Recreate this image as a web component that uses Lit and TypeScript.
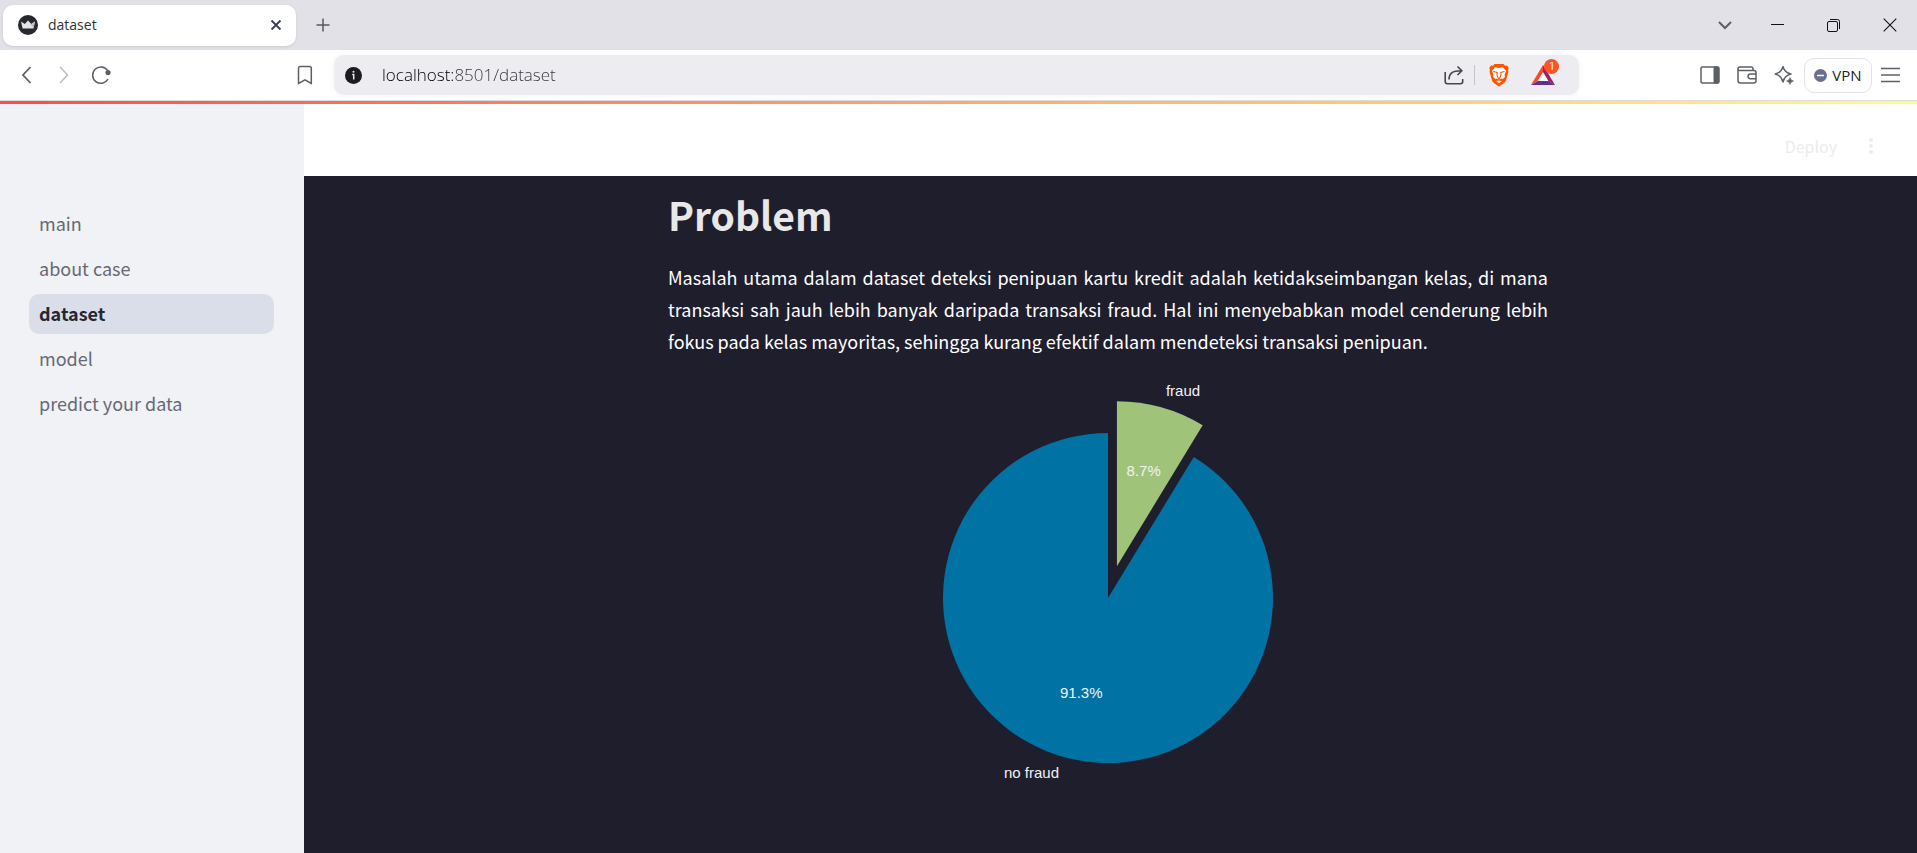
import { LitElement, html, svg, css } from "lit";
import { customElement, state } from "lit/decorators.js";

interface Slice {
  label: string;
  share: number;
  color: string;
  explode: number;
}

const slices: Slice[] = [
  { label: "fraud", share: 0.087, color: "#9fc379", explode: 0.2 },
  { label: "no fraud", share: 0.913, color: "#0072a3", explode: 0 },
];

@customElement("pie-chart")
class PieChart extends LitElement {
  static styles = css`
    :host { display: block; }
    .chart { display: block; width: 100%; height: auto; }
    .label { font: 15px "Liberation Sans", Arial, sans-serif; fill: #f2f2f4; }
    .start { text-anchor: start; }
    .middle { text-anchor: middle; }
    .end { text-anchor: end; }
  `;

  render() {
    const cx = 440, cy = 228, r = 165;
    let from = 0;
    const parts = slices.map((s) => {
      const a0 = from * 2 * Math.PI;
      const a1 = (from + s.share) * 2 * Math.PI;
      const mid = (a0 + a1) / 2;
      from += s.share;
      const ox = cx + Math.sin(mid) * r * s.explode;
      const oy = cy - Math.cos(mid) * r * s.explode;
      const at = (a: number, d: number) => [ox + Math.sin(a) * d, oy - Math.cos(a) * d];
      const [x0, y0] = at(a0, r);
      const [x1, y1] = at(a1, r);
      const [px, py] = at(mid, r * 0.6);
      const [lx, ly] = at(mid, r * 1.1);
      const d = `M${ox} ${oy}L${x0} ${y0}A${r} ${r} 0 ${s.share > 0.5 ? 1 : 0} 1 ${x1} ${y1}Z`;
      return svg`
        <path d=${d} fill=${s.color}></path>
        <text class="label middle" x=${px} y=${py + 5}>${(s.share * 100).toFixed(1)}%</text>
        <text class="label ${lx > cx ? "start" : "end"}" x=${lx} y=${ly + 5}>${s.label}</text>`;
    });
    return html`<svg class="chart" viewBox="0 0 880 440" role="img" aria-label="Share of fraud and no fraud">${parts}</svg>`;
  }
}

@customElement("browser-chrome")
class BrowserChrome extends LitElement {
  static styles = css`
    :host { display: block; font-family: "Open Sans", "Segoe UI", sans-serif; color: #3b3e4f; }
    button { border: 0; background: none; padding: 0; font: inherit; color: inherit; display: flex; align-items: center; justify-content: center; }
    svg { display: block; fill: none; stroke: currentColor; stroke-width: 1.5; }
    .tabs { display: flex; align-items: center; height: 50px; background: #e2e1e7; }
    .tab { display: flex; align-items: center; gap: 10px; box-sizing: border-box; width: 293px; height: 41px; margin-left: 3px; padding: 0 14px 0 15px; border-radius: 10px; background: #fff; box-shadow: 0 1px 3px #0000001a; }
    .tab-title { flex: 1; font-size: 14px; line-height: 20px; color: #2f3136; }
    .new-tab { width: 24px; height: 24px; margin-left: 15px; color: #55585c; }
    .window { display: flex; margin-left: auto; color: #111; }
    .window button { width: 57px; height: 40px; }
    .window .search { width: 44px; color: #5c5f64; }
    .window .minimize { width: 60px; }
    .window .maximize { width: 52px; }
    .window .close { width: 62px; margin-right: -4px; }
    .bar { display: flex; align-items: center; height: 50px; background: #fff; border-bottom: 1px solid #dcdce2; color: #5c6066; }
    .nav { display: flex; gap: 7px; margin-left: 12px; }
    .nav button { width: 30px; height: 30px; }
    .nav .muted { color: #b9bbbf; }
    .bookmark { width: 30px; height: 30px; margin-left: 174px; }
    .address { display: flex; align-items: center; flex: 1; height: 40px; margin-left: 14px; padding-left: 11px; border-radius: 10px; background: #ededf1; box-shadow: 0 0 8px #0000000d; color: #45484d; }
    .url { flex: 1; min-width: 0; border: 0; outline: 0; padding: 0 0 2px; margin-left: 20px; height: 30px; font: 300 17px "Open Sans", "Segoe UI", sans-serif; color: transparent; background: linear-gradient(90deg, #000 71px, #33353f 71px); background-clip: text; -webkit-background-clip: text; }
    .share { width: 30px; height: 30px; }
    .divider { width: 1px; height: 20px; margin: 0 10px 0 5px; background: #c4c5cb; }
    .shield { width: 28px; height: 30px; }
    .rewards { position: relative; width: 30px; height: 30px; margin: 0 21px 0 15px; }
    .badge { position: absolute; top: -1px; right: -1px; width: 15px; height: 15px; border-radius: 8px; background: #fb542b; color: #fff; font: 10px/15px "Inter", sans-serif; text-align: center; }
    .tools { display: flex; align-items: center; margin-left: 112px; margin-right: 9px; }
    .tool { width: 37px; height: 30px; }
    .vpn { box-sizing: border-box; width: 68px; height: 35px; margin-left: 2px; gap: 5px; border: 1px solid #e2e3e8; border-radius: 10px; font-size: 15px; color: #1d1f25; }
    .menu { width: 36px; height: 30px; }
  `;

  @state() private url = "localhost:8501/dataset";

  render() {
    return html`
      <div class="tabs">
        <div class="tab">
          <svg width="20" height="20" viewBox="0 0 20 20"><circle cx="10" cy="10" r="10" fill="#262730" stroke="none"/><path d="M3 6.5 6.8 9 10 5.6 13.2 9 17 6.5 15.4 13.4H4.6Z" fill="#e4e4e6" stroke="none"/><path d="M10 5.6 13.2 9 17 6.5 15.4 13.4Z" fill="#bdbdc2" stroke="none"/></svg>
          <span class="tab-title">dataset</span>
          <button aria-label="Close tab"><svg width="12" height="12" viewBox="0 0 12 12"><path d="M1.5 1.5 10.5 10.5M10.5 1.5 1.5 10.5" stroke-width="1.8"/></svg></button>
        </div>
        <button class="new-tab" aria-label="New tab"><svg width="14" height="14" viewBox="0 0 14 14"><path d="M7 .5V13.500M.5 7H13.500"/></svg></button>
        <div class="window">
          <button class="search" aria-label="Search tabs"><svg width="14" height="10" viewBox="0 0 14 10"><path d="M1 2 7 8 13 2" stroke-width="2"/></svg></button>
          <button class="minimize" aria-label="Minimize"><svg width="13" height="13" viewBox="0 0 13 13"><path d="M0 5.500H13" stroke-width="1"/></svg></button>
          <button class="maximize" aria-label="Restore"><svg width="13" height="13" viewBox="0 0 13 13"><rect x=".5" y="2.500" width="10" height="10" rx="1.500" stroke-width="1"/><path d="M3 .5H10.500A2 2 0 0 1 12.500 2.500V10" stroke-width="1"/></svg></button>
          <button class="close" aria-label="Close"><svg width="14" height="14" viewBox="0 0 14 14"><path d="M.7.7 13.300 13.300M13.300.7.7 13.300" stroke-width="1.1"/></svg></button>
        </div>
      </div>
      <div class="bar">
        <div class="nav">
          <button aria-label="Back"><svg width="12" height="18" viewBox="0 0 12 18"><path d="M9.500 1 2 9 9.500 17" stroke-width="1.8"/></svg></button>
          <button class="muted" aria-label="Forward"><svg width="12" height="18" viewBox="0 0 12 18"><path d="M2 1 9.500 9 2 17" stroke-width="1.5"/></svg></button>
          <button aria-label="Reload"><svg width="20" height="20" viewBox="0 0 20 20"><path d="M17 14.200A8.200 8.200 0 1 1 16.500 5.300"/><circle cx="17" cy="7.600" r="2.600" fill="currentColor" stroke="none"/></svg></button>
        </div>
        <button class="bookmark" aria-label="Bookmark"><svg width="16" height="20" viewBox="0 0 16 20"><path d="M3 1.500H12.500Q14.300 1.500 14.300 3.300V18.500L8 14.800 1.500 18.500V3.300Q1.500 1.500 3 1.500Z"/></svg></button>
        <div class="address">
          <svg width="17" height="17" viewBox="0 0 17 17"><circle cx="8.500" cy="8.500" r="8.500" fill="#1b1b21" stroke="none"/><path d="M7.200 7.500H8.700V12.500" stroke="#e8e8ec"/><circle cx="8.500" cy="4.800" r="1" fill="#e8e8ec" stroke="none"/></svg>
          <input class="url" aria-label="Address" spellcheck="false" .value=${this.url}
            @input=${(e: InputEvent) => (this.url = (e.target as HTMLInputElement).value)} />
          <button class="share" aria-label="Share"><svg width="20" height="20" viewBox="0 0 20 20"><path d="M1.200 7V16.500Q1.200 18.700 3.400 18.700H16.500Q18.700 18.700 18.700 16.500V14M5 14.500C5 8.500 8 5.700 17.500 5.700M13.500 1.500 17.800 5.700 13.500 10" stroke-width="1.6"/></svg></button>
          <span class="divider"></span>
          <button class="shield" aria-label="Shields">
            <svg width="20" height="24" viewBox="0 0 20 24"><path d="M5.500 1H14.500L16 2.700 18 2.500 19.800 5 19 7 19.500 8.500 17 17.500Q16.500 19 14.500 20.500L10 23.500 5.500 20.500Q3.500 19 3 17.500L.5 8.500 1 7 .2 5 2 2.500 4 2.700Z" fill="#ff5500" stroke="none"/><path d="M6 4.300 10 5 14 4.300 17 7.800 15.500 12 16 14 13.500 16 12 15.500 10.800 16.500 13 18 10 20.300 7 18 9.200 16.500 8 15.500 6.500 16 4 14 4.500 12 3 7.800Z" fill="#fff" stroke="none"/><path d="M4.500 8.500 8.200 9.500 8 12 9.200 15 10 15.700 10.800 15 12 12 11.800 9.500 15.500 8.500M7.500 17.700 10 16.700 12.500 17.700" stroke="#ff5500" stroke-width="1.100"/></svg>
          </button>
          <button class="rewards" aria-label="Rewards">
            <svg width="24" height="20" viewBox="0 0 24 20"><path d="M12 0 0 20 7 16 12 7.500Z" fill="#ff4724" stroke="none"/><path d="M12 0 24 20 17 16 12 7.500Z" fill="#9e1f63" stroke="none"/><path d="M0 20H24L17 16H7Z" fill="#662d91" stroke="none"/><path d="M12 7 6.700 16H17.300Z" fill="#fff" stroke="none"/></svg>
            <span class="badge">1</span>
          </button>
        </div>
        <div class="tools">
          <button class="tool" aria-label="Sidebar"><svg width="20" height="18" viewBox="0 0 20 18"><rect x="1" y="1" width="18" height="16" rx="1.500"/><path d="M14 1H18.500V17H14Z" fill="currentColor" stroke-width="1"/></svg></button>
          <button class="tool" aria-label="Wallet"><svg width="20" height="18" viewBox="0 0 20 18"><path d="M16 4V2.800Q16 1 14.200 1H2.800Q1 1 1 2.800V14.500Q1 17 3.500 17H16.500Q19 17 19 15V6.500Q19 4.500 17 4.500H2.500Q1 4.500 1 2.800M19 8H13.500Q11 8 11 10.300T13.500 12.700H19"/></svg></button>
          <button class="tool" aria-label="Assistant"><svg width="20" height="20" viewBox="0 0 20 20"><path d="M9 1.500Q10.500 7.500 17 9 10.500 10.500 9 17 7.500 10.500 1.200 9 7.500 7.500 9 1.500Z" stroke-linejoin="round" stroke-width="1.400"/><path d="M16 12.500Q16.500 15.500 19.500 16 16.500 16.500 16 19.500 15.500 16.500 12.500 16 15.500 15.500 16 12.500Z" fill="currentColor" stroke-width=".6"/></svg></button>
          <button class="vpn"><svg width="13" height="13" viewBox="0 0 13 13"><circle cx="6.500" cy="6.500" r="6.500" fill="#6b7090" stroke="none"/><path d="M3 6.500H10" stroke="#fff"/></svg>VPN</button>
          <button class="menu" aria-label="Menu"><svg width="19" height="16" viewBox="0 0 19 16"><path d="M0 1.500H19M0 8H19M0 14.500H19"/></svg></button>
        </div>
      </div>`;
  }
}

@customElement("app-root")
class AppRoot extends LitElement {
  static styles = css`
    :host { display: flex; flex-direction: column; min-height: 100vh; overflow: hidden; font-family: "Noto Sans CJK SC", sans-serif; font-size: 18px; }
    .accent { height: 3px; background: linear-gradient(90deg, #ff4b4b, #ffa066 45%, #ffd06a 75%, #fffd80); }
    .app { display: flex; flex: 1; background: #1f1e2d; }
    .sidebar { box-sizing: border-box; width: 304px; flex: none; padding: 100px 30px 0 29px; background: #f0f2f6; }
    .links { display: flex; flex-direction: column; gap: 5px; margin: 0; padding: 0; list-style: none; }
    .link { display: block; padding: 0 10px 2px; border-radius: 10px; line-height: 38px; color: #666975; text-decoration: none; }
    .link.current { background: #dadee9; color: #262730; font-weight: 600; }
    .main { flex: 1; min-width: 0; }
    .header { display: flex; align-items: center; justify-content: flex-end; gap: 24px; box-sizing: border-box; height: 72px; padding: 12px 36px 0 0; background: #fff; color: #ececec; }
    .header button { border: 0; padding: 0; background: none; font: 16px "Noto Sans CJK SC", sans-serif; color: inherit; }
    .more { display: block; fill: currentColor; }
    .content { padding: 8px 5px 0 0; }
    .column { max-width: 880px; margin: 0 auto; }
    h1 { margin: 0; font-size: 39px; font-weight: 600; line-height: 60px; color: #e8e8e8; }
    .text { margin: 17px 0 13px; line-height: 32px; text-align: justify; color: #fff; }
  `;

  @state() private current = "dataset";

  render() {
    const pages = ["main", "about case", "dataset", "model", "predict your data"];
    return html`
      <browser-chrome></browser-chrome>
      <div class="accent"></div>
      <div class="app">
        <nav class="sidebar">
          <ul class="links">
            ${pages.map((p) => html`<li><a class="link ${p === this.current ? "current" : ""}" href="#${p}" @click=${() => (this.current = p)}>${p}</a></li>`)}
          </ul>
        </nav>
        <main class="main">
          <header class="header">
            <button>Deploy</button>
            <button aria-label="More"><svg class="more" width="20" height="20" viewBox="0 0 20 20"><circle cx="10" cy="4" r="2"/><circle cx="10" cy="10" r="2"/><circle cx="10" cy="16" r="2"/></svg></button>
          </header>
          <div class="content">
            <div class="column">
              <h1>Problem</h1>
              <p class="text">Masalah utama dalam dataset deteksi penipuan kartu kredit adalah ketidakseimbangan kelas, di mana transaksi sah jauh lebih banyak daripada transaksi fraud. Hal ini menyebabkan model cenderung lebih fokus pada kelas mayoritas, sehingga kurang efektif dalam mendeteksi transaksi penipuan.</p>
              <pie-chart></pie-chart>
            </div>
          </div>
        </main>
      </div>`;
  }
}
